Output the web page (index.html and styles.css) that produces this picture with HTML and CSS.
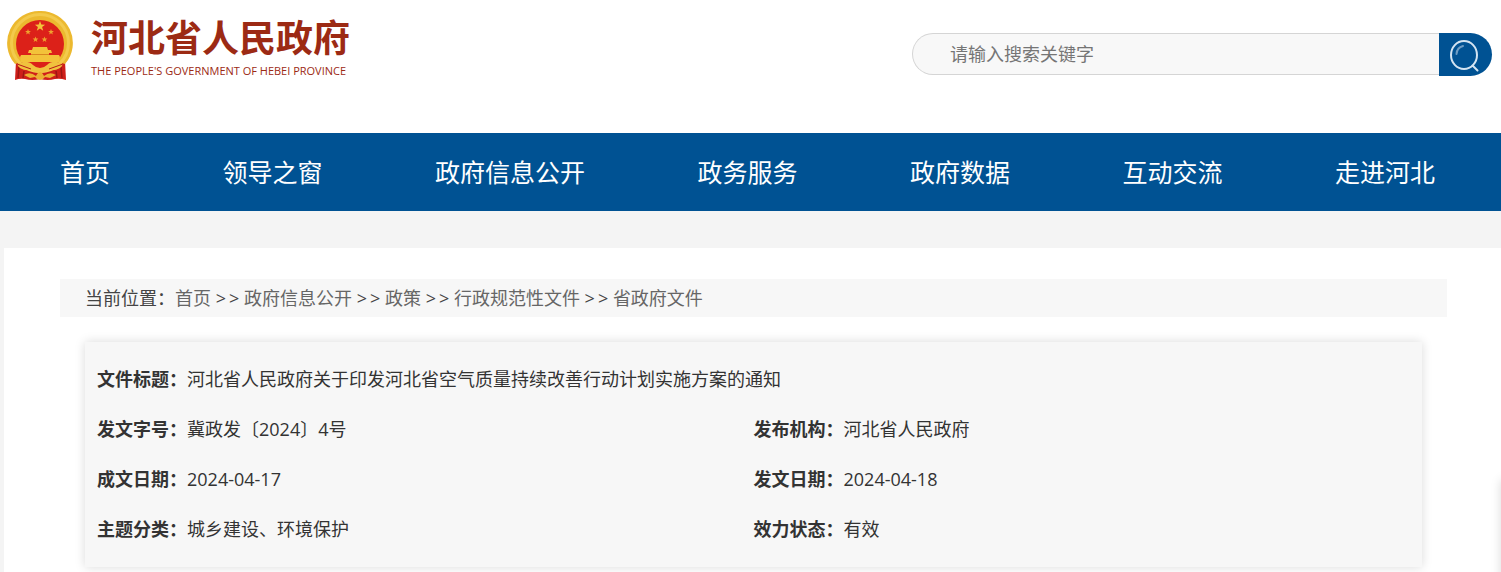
FILE: index.html
```
<!DOCTYPE html>
<html lang="zh-CN">
<head>
    <meta charset="UTF-8">
    <meta name="viewport" content="width=device-width, initial-scale=1.0">
    <title>河北省人民政府</title>
    <link rel="stylesheet" href="styles.css">
</head>
<body>
    <header class="header">
        <a class="logo" href="#">
            <svg class="emblem" viewBox="6 9 68 73" aria-hidden="true">
                <!-- ribbon -->
                <path d="M16 60 L15 79 Q20 77 25 78 Q32 80 40 78 Q48 80 55 78 Q60 77 66 79 L65 60 Z" fill="#cf1f1a"/>
                <path d="M19 66 l-1 11 M24 70 l-1 7 M61 66 l1 11 M56 70 l1 7" stroke="#9c1713" stroke-width="1.500" fill="none"/>
                <!-- wreath -->
                <path d="M40 10 A32 32 0 0 1 65 63 L55 60 L25 60 L15 63 A32 32 0 0 1 40 10z" fill="#ecb92f"/>
                <circle cx="40" cy="42" r="28.500" fill="none" stroke="#f3ca4c" stroke-width="3"/>
                <circle cx="40" cy="43" r="24" fill="#dc2119"/>
                <!-- stars -->
                <path d="M40 20 l1.300 3.600 3.800 0.100 -3 2.300 1.100 3.700 -3.200 -2.200 -3.200 2.200 1.100 -3.700 -3 -2.300 3.800 -0.100z" fill="#f3c43a"/>
                <path id="star" d="M28 28 l.8 2 2.100.1 -1.700 1.300 .7 2.100 -1.900 -1.200 -1.900 1.200 .7 -2.100 -1.700 -1.300 2.100 -.1z" fill="#efa22f"/>
                <use href="#star" x="23"/>
                <use href="#star" x="7.500" y="7.500"/>
                <use href="#star" x="16.500" y="7.500"/>
                <!-- gate -->
                <path d="M33 46 h14 l1 3 h3 l1 3 h-3 v2 h10 l1 2 -1 5 H21 l-1 -5 1 -2 h10 v-2 h-3 l1 -3 h3z" fill="#f3c23a"/>
                <path d="M31 53.500 h18" stroke="#d9871f" stroke-width="1"/>
                <!-- knot -->
                <path d="M17 63 Q27 58 33 64 Q36 67 40 67 Q44 67 47 64 Q53 58 63 63 Q60 70 50 69 Q44 72 40 72 Q36 72 30 69 Q20 70 17 63z" fill="#f0c23e"/>
                <path d="M24 74 Q30 70 36 75 Q38 71 40 71 Q42 71 44 75 Q50 70 56 74 L50 77 L45 76 Q43 79 40 79 Q37 79 35 76 L30 77z" fill="#ebb031"/>
                <path d="M17 63 L31 68 M63 63 L49 68" stroke="#b81b17" stroke-width="1"/>
            </svg>
            <span class="logo-text">
                <span class="logo-cn">河北省人民政府</span>
                <span class="logo-en">THE PEOPLE'S GOVERNMENT OF HEBEI PROVINCE</span>
            </span>
        </a>
        <form class="search">
            <input class="search-input" type="text" placeholder="请输入搜索关键字" aria-label="请输入搜索关键字">
            <button class="search-btn" type="submit" aria-label="搜索">
                <svg class="search-icon" viewBox="0 0 34 34" aria-hidden="true">
                    <ellipse cx="15" cy="17" rx="13" ry="14" />
                    <path d="M23.500 27.500 l5 5" />
                    <path class="glint" d="M7.500 16 Q8 9.500 14 8" />
                </svg>
            </button>
        </form>
    </header>

    <nav class="nav">
        <a href="#">首页</a>
        <a href="#">领导之窗</a>
        <a href="#">政府信息公开</a>
        <a href="#">政务服务</a>
        <a href="#">政府数据</a>
        <a href="#">互动交流</a>
        <a href="#">走进河北</a>
    </nav>

    <main class="content">
        <div class="breadcrumb">
            当前位置：<a href="#">首页</a>
            <span class="sep"><i>&gt;</i><i>&gt;</i></span>
            <a href="#">政府信息公开</a>
            <span class="sep"><i>&gt;</i><i>&gt;</i></span>
            <a href="#">政策</a>
            <span class="sep"><i>&gt;</i><i>&gt;</i></span>
            <a href="#">行政规范性文件</a>
            <span class="sep"><i>&gt;</i><i>&gt;</i></span>
            <a href="#">省政府文件</a>
        </div>
        <div class="info">
            <table class="info-table">
                <tr>
                    <td colspan="2"><b>文件标题：</b>河北省人民政府关于印发河北省空气质量持续改善行动计划实施方案的通知</td>
                </tr>
                <tr>
                    <td><b>发文字号：</b>冀政发〔2024〕4号</td>
                    <td><b>发布机构：</b>河北省人民政府</td>
                </tr>
                <tr>
                    <td><b>成文日期：</b>2024-04-17</td>
                    <td><b>发文日期：</b>2024-04-18</td>
                </tr>
                <tr>
                    <td><b>主题分类：</b>城乡建设、环境保护</td>
                    <td><b>效力状态：</b>有效</td>
                </tr>
            </table>
        </div>
    </main>
    <aside class="side-panel"></aside>
</body>
</html>
```
FILE: styles.css
```
* {
    box-sizing: border-box;
}
body {
    margin: 0;
    background-color: #f4f4f4;
    color: #333;
    font-family: "Open Sans", "Noto Sans CJK SC", sans-serif;
    font-size: 18px;
    overflow-x: hidden;
}
a {
    color: inherit;
    text-decoration: none;
}
.header {
    display: flex;
    justify-content: space-between;
    align-items: flex-start;
    height: 133px;
    padding: 10px 9px 0 6px;
    background-color: #fff;
}
.logo {
    display: flex;
    gap: 17px;
    color: #9c2a14;
}
.emblem {
    width: 68px;
    height: 73px;
}
.logo-text {
    display: flex;
    flex-direction: column;
    padding-top: 6px;
}
.logo-cn {
    font-size: 37px;
    line-height: 44px;
    font-weight: bold;
}
.logo-en {
    font-size: 11px;
    line-height: 22px;
}
.search {
    display: flex;
    align-items: flex-start;
    width: 580px;
    margin-top: 23px;
}
.search-input {
    flex: 1;
    min-width: 0;
    height: 42px;
    padding: 0 37px;
    border: 1px solid #d5d5d5;
    border-right: none;
    border-radius: 21px 0 0 21px;
    background-color: #f8f8f8;
    font-family: inherit;
    font-size: 18px;
}
.search-input::placeholder {
    color: #757575;
}
.search-btn {
    display: flex;
    align-items: center;
    justify-content: center;
    width: 53px;
    height: 43px;
    padding: 0;
    border: none;
    border-radius: 0 22px 22px 0;
    background-color: #005293;
    cursor: pointer;
}
.search-icon {
    width: 34px;
    height: 34px;
    fill: none;
    stroke: #d3e4f2;
    stroke-width: 2;
    stroke-linecap: round;
}
.glint {
    stroke: #6d9cc4;
}
.nav {
    display: flex;
    justify-content: space-between;
    padding: 0 66px 0 60px;
    background-color: #005293;
    color: #fff;
    font-size: 25px;
    line-height: 78px;
}
.content {
    margin: 37px 0 0 4px;
    padding: 31px 54px 5px 56px;
    background-color: #fff;
}
.breadcrumb {
    padding: 0 25px;
    background-color: #f7f7f7;
    color: #444;
    line-height: 38px;
}
.breadcrumb a {
    color: #666;
}
.sep {
    display: inline-flex;
    gap: 3px;
}
.sep i {
    font-style: normal;
}
.info {
    margin: 25px 25px 0;
    padding: 11px 12px 14px;
    background-color: #f7f7f7;
    box-shadow: 0 0 10px rgba(0, 0, 0, 0.15);
}
.info-table {
    width: 100%;
    border-collapse: collapse;
    table-layout: fixed;
}
.info-table td {
    height: 50px;
    padding: 0;
}
.side-panel {
    position: fixed;
    top: 480px;
    right: -60px;
    bottom: -20px;
    width: 60px;
    box-shadow: 0 0 10px rgba(0, 0, 0, 0.15);
}
```
